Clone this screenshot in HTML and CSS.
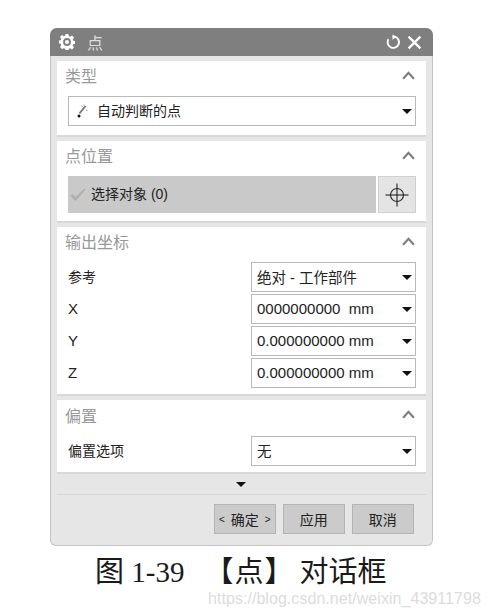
FILE: index.html
```html
<!DOCTYPE html>
<html lang="zh-CN">
  <head>
    <meta charset="UTF-8" />
    <title>点</title>
    <link rel="stylesheet" href="styles.css">
  </head>
  <body>
    <div class="dialog">
      <div class="titlebar">
        <svg class="gear" viewBox="0 0 16 16">
          <path d="M6.600 0h2.800l.4 2.200 1.300.6L13 1.500l2 2-1.300 1.900.6 1.300 2.200.4v2.800l-2.200.4-.6 1.300 1.300 1.900-2 2-1.900-1.300-1.300.6-.4 2.200H6.600l-.4-2.200-1.300-.6L3 15l-2-2 1.300-1.900-.6-1.300L-.5 9.400V6.600l2.200-.4.6-1.300L1 3l2-2 1.900 1.300 1.300-.6z" fill="#fff"/>
          <circle cx="8" cy="8" r="3.900" fill="#7f7f7f"/>
          <circle cx="8" cy="8" r="2" fill="#fff"/>
        </svg>
        <span class="title">点</span>
        <svg class="reset" viewBox="0 0 14 14">
          <path d="M8.500 2.300A5 5 0 1 1 3 4.500" fill="none" stroke="#fff" stroke-width="1.700"/>
          <path d="M6.500 0.500v4.600l3.600-2.600z" fill="#fff"/>
        </svg>
        <svg class="close" viewBox="0 0 14 14">
          <path d="M1.500 1.500l11 11M12.500 1.500l-11 11" stroke="#fff" stroke-width="2.200"/>
        </svg>
      </div>

      <section class="group group-type">
        <div class="group-head">
          <span>类型</span>
          <svg class="chevron" viewBox="0 0 12 8"><path d="M1 7l5-5.500L11 7" fill="none" stroke="#7d7d7d" stroke-width="2"/></svg>
        </div>
        <div class="select select-wide">
          <svg class="wand" viewBox="0 0 12 14">
            <path d="M9.500 2L3.500 9.500" stroke="#777" stroke-width="2"/>
            <path d="M5.500 1.500l1 1.500M10 6l1.500 .5M8 .5v1" stroke="#999" stroke-width="1"/>
            <circle cx="3" cy="12" r="1.500" fill="#111"/>
          </svg>
          <span class="select-text">自动判断的点</span>
          <i class="caret"></i>
        </div>
      </section>

      <section class="group group-point">
        <div class="group-head">
          <span>点位置</span>
          <svg class="chevron" viewBox="0 0 12 8"><path d="M1 7l5-5.500L11 7" fill="none" stroke="#7d7d7d" stroke-width="2"/></svg>
        </div>
        <div class="pick-row">
          <div class="pick">
            <svg class="check" viewBox="0 0 16 13"><path d="M0.500 7.500l2-1.500 3 3L14.500 .5l1 1L6 12.500h-1.500z" fill="#aeaeae"/></svg>
            <span class="pick-text">选择对象 (0)</span>
          </div>
          <div class="pick-btn">
            <svg class="cross" viewBox="0 0 24 24">
              <circle cx="12" cy="12" r="6.500" fill="none" stroke="#333" stroke-width="1.200"/>
              <path d="M0.500 12h23M12 .5v23" stroke="#111" stroke-width="1"/>
            </svg>
          </div>
        </div>
      </section>

      <section class="group group-coords">
        <div class="group-head">
          <span>输出坐标</span>
          <svg class="chevron" viewBox="0 0 12 8"><path d="M1 7l5-5.500L11 7" fill="none" stroke="#7d7d7d" stroke-width="2"/></svg>
        </div>
        <div class="field">
          <label>参考</label>
          <div class="select"><span class="select-text">绝对 - 工作部件</span><i class="caret"></i></div>
        </div>
        <div class="field">
          <label class="axis">X</label>
          <div class="select num"><span class="select-text">0000000000&nbsp; mm</span><i class="caret"></i></div>
        </div>
        <div class="field">
          <label class="axis">Y</label>
          <div class="select num"><span class="select-text">0.000000000 mm</span><i class="caret"></i></div>
        </div>
        <div class="field">
          <label class="axis">Z</label>
          <div class="select num"><span class="select-text">0.000000000 mm</span><i class="caret"></i></div>
        </div>
      </section>

      <section class="group group-offset">
        <div class="group-head">
          <span>偏置</span>
          <svg class="chevron" viewBox="0 0 12 8"><path d="M1 7l5-5.500L11 7" fill="none" stroke="#7d7d7d" stroke-width="2"/></svg>
        </div>
        <div class="field">
          <label>偏置选项</label>
          <div class="select"><span class="select-text">无</span><i class="caret"></i></div>
        </div>
      </section>

      <div class="more"><i class="caret caret-more"></i></div>

      <div class="actions">
        <button class="btn"><span class="arrow">&lt;</span>确定<span class="arrow">&gt;</span></button>
        <button class="btn">应用</button>
        <button class="btn">取消</button>
      </div>
    </div>

    <p class="caption">图 1-39<span class="caption-gap"></span><span class="caption-point">【点】</span><span class="caption-gap-small"></span>对话框</p>
    <p class="watermark">https://blog.csdn.net/weixin_43911798</p>
  </body>
</html>
```

FILE: styles.css
```css
/* General Styling */
body {
  margin: 0;
  padding-top: 28px;
  background-color: #fff;
  font-family: "Liberation Sans", "Noto Sans CJK SC", sans-serif;
  color: #222;
  font-size: 14px;
  overflow: hidden;
}

.dialog {
  width: 381px;
  height: 517px;
  margin-left: 50px;
  background-color: #e6e6e6;
  border: 1px solid #c4c4c4;
  border-top: none;
  border-radius: 7px 7px 6px 6px;
}

.titlebar {
  display: flex;
  align-items: center;
  height: 28px;
  margin: 0 -1px;
  padding: 0 11px 0 9px;
  background-color: #7f7f7f;
  border-radius: 7px 7px 0 0;
  color: #ddd;
  font-size: 16px;
}

.gear {
  width: 16px;
  height: 16px;
}

.title {
  margin-left: 12px;
  flex: 1;
}

.reset {
  width: 16px;
  height: 16px;
  margin-right: 6px;
}

.close {
  width: 15px;
  height: 15px;
}

/* Groups */
.group {
  margin: 0 6px 4px 6px;
  padding: 0 10px 0 11px;
  background-color: #fff;
  border-bottom: 2px solid #d8d8d8;
  box-sizing: border-box;
}

.group-type {
  margin-top: 5px;
  height: 76px;
}

.group-point {
  height: 82px;
}

.group-coords {
  height: 169px;
}

.group-offset {
  height: 74px;
  margin-bottom: 0;
}

.group-head {
  display: flex;
  justify-content: space-between;
  align-items: center;
  height: 35px;
  margin: 0 1px 0 -3px;
  padding-bottom: 7px;
  box-sizing: border-box;
  color: #999;
  font-size: 16px;
}

.group-offset .group-head {
  height: 36px;
}

.chevron {
  width: 13px;
  height: 9px;
}

.select {
  display: flex;
  align-items: center;
  width: 165px;
  height: 30px;
  padding: 0 3px 0 5px;
  background-color: #fff;
  border: 1px solid #b9b9b9;
  box-sizing: border-box;
  font-size: 14.500px;
  white-space: nowrap;
}

.select.num {
  font-size: 15px;
}

.select-wide {
  width: 348px;
  font-size: 14px;
}

.select-text {
  flex: 1;
  overflow: hidden;
  padding-bottom: 2px;
}

.wand {
  width: 12px;
  height: 14px;
  margin: 0 9px 0 2px;
}

.caret {
  display: block;
  width: 0;
  height: 0;
  border-left: 5.500px solid transparent;
  border-right: 5.500px solid transparent;
  border-top: 5px solid #111;
}

.pick-row {
  display: flex;
  justify-content: space-between;
  height: 37px;
}

.pick {
  display: flex;
  align-items: center;
  width: 308px;
  background-color: #c9c9c9;
  padding-left: 2px;
  box-sizing: border-box;
}

.pick-text {
  padding-bottom: 3px;
}

.check {
  width: 16px;
  height: 13px;
  margin-right: 5px;
}

.pick-btn {
  display: flex;
  align-items: center;
  justify-content: center;
  width: 38px;
  background-color: #e4e4e4;
  border: 1px solid #cfcfcf;
  box-sizing: border-box;
}

.cross {
  width: 24px;
  height: 24px;
}

.field {
  display: flex;
  justify-content: space-between;
  align-items: center;
  margin-bottom: 2px;
}

.field label {
  padding-bottom: 2px;
}

.axis {
  font-size: 15px;
}

.more {
  display: flex;
  justify-content: center;
  align-items: center;
  height: 21px;
  margin: 0 6px;
  border-bottom: 1px solid #d6d6d6;
  box-sizing: border-box;
}

.caret-more {
  margin-left: -1px;
}

.actions {
  display: flex;
  justify-content: flex-end;
  gap: 6.500px;
  margin: 9px 18px 0 0;
}

.btn {
  display: flex;
  justify-content: center;
  align-items: center;
  gap: 6px;
  width: 62.500px;
  height: 30px;
  padding: 0;
  background-color: #cbcbcb;
  border: 1px solid #b4b4b4;
  font-family: inherit;
  font-size: 14px;
  color: #222;
}

.arrow {
  font-size: 10px;
}

.caption {
  margin: 8px 0 0 95px;
  font-family: "Liberation Serif", "Noto Sans CJK SC", serif;
  font-size: 29px;
  line-height: 36px;
  color: #1a1a1a;
  white-space: nowrap;
}

.caption-gap {
  display: inline-block;
  width: 20px;
}

.caption-gap-small {
  display: inline-block;
  width: 5px;
}

.caption-point {
  letter-spacing: 1px;
}

.watermark {
  margin: 0 0 0 208px;
  font-size: 16px;
  line-height: 18px;
  letter-spacing: 0.05px;
  color: #dcdcdc;
  white-space: nowrap;
}
```
